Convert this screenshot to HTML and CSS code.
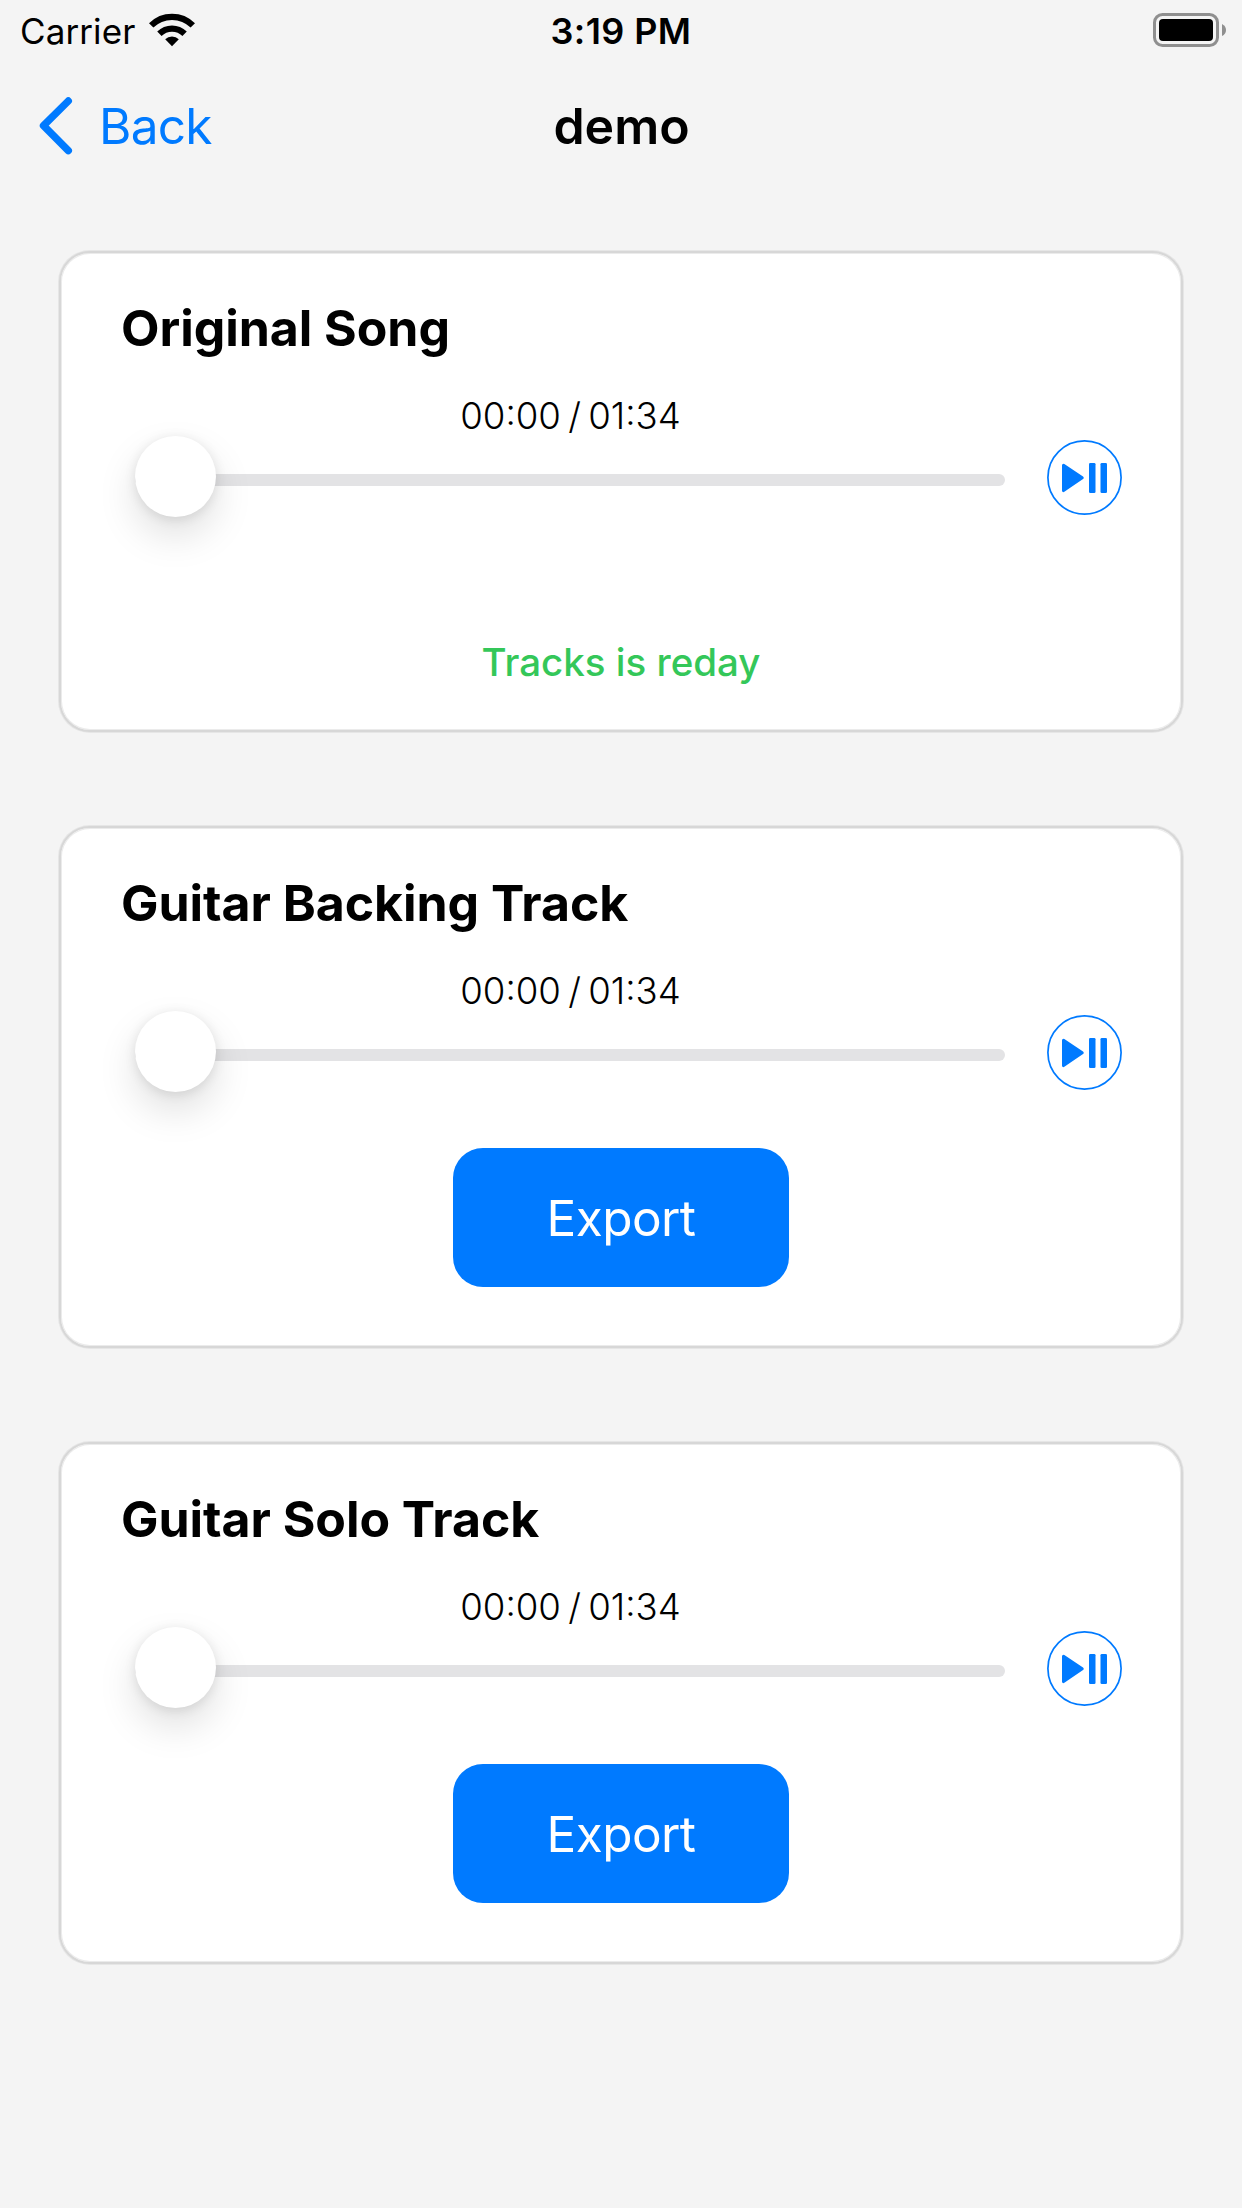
FILE: index.html
```html
<!DOCTYPE html>
<html lang="en">
<head>
<meta charset="utf-8">
<title>demo</title>
<link rel="stylesheet" href="styles.css">
</head>
<body>
<svg class="defs" width="0" height="0" aria-hidden="true">
  <symbol id="play-pause" viewBox="0 0 75 75">
    <circle cx="37.5" cy="37.5" r="36.6" fill="none" stroke="currentColor" stroke-width="1.7"/>
    <path d="M16.5 25.2l18.7 12.6-18.7 12.8z" fill="currentColor" stroke="currentColor" stroke-width="3" stroke-linejoin="round"/>
    <rect x="42" y="23" width="6.5" height="30" rx="1.3" fill="currentColor"/>
    <rect x="53.5" y="23" width="6.5" height="30" rx="1.3" fill="currentColor"/>
  </symbol>
</svg>
<header class="status">
  <div class="status-left">
    <span class="carrier">Carrier</span>
    <svg class="wifi" width="46" height="34" viewBox="0 0 46 34">
      <g fill="none" stroke="#000" stroke-width="6.2">
        <path d="M2.2 12.4A29.5 29.5 0 0 1 43.8 12.4"/>
        <path d="M10.4 20.8A18 18 0 0 1 35.6 20.8"/>
      </g>
      <path d="M23 33.2l-6.8-6.9a9.7 9.7 0 0 1 13.6 0z"/>
    </svg>
  </div>
  <span class="clock">3:19 PM</span>
  <svg class="battery" width="74" height="34" viewBox="0 0 74 34">
    <rect x="1.5" y="1.5" width="63" height="31" rx="8" fill="none" stroke="#8f8f8f" stroke-width="3"/>
    <rect x="6" y="6" width="54" height="22" rx="4"/>
    <path d="M69 11q4 2 4 6t-4 6z" fill="#8f8f8f"/>
  </svg>
</header>
<nav class="nav">
  <a class="back">
    <svg width="34" height="58" viewBox="0 0 34 58"><path d="M29.3 4L4.5 28.7 29.3 53.7" fill="none" stroke="currentColor" stroke-width="7.4" stroke-linecap="round" stroke-linejoin="round"/></svg>
    <span class="back-text">Back</span>
  </a>
  <h1 class="page-title">demo</h1>
</nav>
<main class="cards">
  <section class="card card-original">
    <h2 class="title">Original Song</h2>
    <div class="player">
      <div class="scrub">
        <div class="time">00:00 / 01:34</div>
        <div class="slider"><div class="track"></div><div class="thumb"></div></div>
      </div>
      <svg class="play" width="75" height="75"><use href="#play-pause"/></svg>
    </div>
    <p class="ready">Tracks is reday</p>
  </section>
  <section class="card">
    <h2 class="title">Guitar Backing Track</h2>
    <div class="player">
      <div class="scrub">
        <div class="time">00:00 / 01:34</div>
        <div class="slider"><div class="track"></div><div class="thumb"></div></div>
      </div>
      <svg class="play" width="75" height="75"><use href="#play-pause"/></svg>
    </div>
    <button class="export">Export</button>
  </section>
  <section class="card">
    <h2 class="title">Guitar Solo Track</h2>
    <div class="player">
      <div class="scrub">
        <div class="time">00:00 / 01:34</div>
        <div class="slider"><div class="track"></div><div class="thumb"></div></div>
      </div>
      <svg class="play" width="75" height="75"><use href="#play-pause"/></svg>
    </div>
    <button class="export">Export</button>
  </section>
</main>
</body>
</html>
```
FILE: styles.css
```css
* { box-sizing: border-box; margin: 0; }
body {
  min-height: 2208px;
  background: #f4f4f4;
  color: #000;
  font-family: Inter, "Liberation Sans", sans-serif;
  white-space: nowrap;
}
.defs { display: none; }
.status {
  display: grid;
  grid-template-columns: 1fr auto 1fr;
  align-items: start;
  height: 60px;
  padding: 0 15px;
}
.status-left { display: flex; padding-left: 5px; }
.carrier, .clock { font-size: 35px; line-height: 62px; }
.carrier { width: 129px; letter-spacing: 0.1px; }
.clock { font-size: 36px; font-weight: 600; letter-spacing: 0.4px; }
.wifi { margin-top: 13px; }
.battery { margin-top: 13px; justify-self: end; }
.nav {
  display: grid;
  grid-template-columns: 1fr auto 1fr;
  height: 191px;
  padding: 36px 39px 0;
}
.back { display: flex; color: #007aff; }
.back svg { margin-top: 1px; }
.back-text { margin-left: 26px; font-size: 49.5px; line-height: 60px; letter-spacing: -0.7px; }
.page-title { padding-left: 1px; font-size: 50px; line-height: 60px; font-weight: 600; }
.cards {
  display: flex;
  flex-direction: column;
  gap: 94px;
  padding: 0 59px;
}
.card {
  display: flex;
  flex-direction: column;
  height: 522px;
  padding: 45px 60px 0;
  border: 2px solid #d7d7d7;
  border-radius: 31px;
  background: #fff;
  box-shadow: 0 0 0 1px #e6e6e6, inset 0 0 0 1px #ebebeb;
}
.card-original { height: 481px; }
.title { font-size: 50px; line-height: 60px; font-weight: 700; letter-spacing: -0.05px; }
.player { display: flex; margin-top: 32px; }
.scrub { flex: none; width: 870px; margin-left: 14px; }
.time {
  height: 46px;
  padding-left: 1px;
  font-size: 36.6px;
  line-height: 53px;
  font-weight: 300;
  word-spacing: -3px;
  text-align: center;
}
.slider { position: relative; height: 81px; padding-top: 38px; }
.track { height: 12px; border-radius: 6px; background: #e3e3e5; }
.thumb {
  position: absolute;
  left: 0;
  top: 0;
  width: 81px;
  height: 81px;
  border-radius: 50%;
  background: #fff;
  box-shadow: 0 18px 39px rgba(0,0,0,.13), 0 2px 12px rgba(0,0,0,.1);
}
.play { flex: none; margin: 50px 0 0 42px; color: #007aff; }
.ready {
  margin-top: 115px;
  color: #34c759;
  font-size: 38.5px;
  line-height: 60px;
  font-weight: 500;
  text-align: center;
}
.export {
  align-self: center;
  width: 336px;
  height: 139px;
  margin-top: 56px;
  padding: 1px 0 0;
  border: 0;
  border-radius: 30px;
  background: #007aff;
  color: #fff;
  font: 400 49.5px/138px Inter, "Liberation Sans", sans-serif;
  letter-spacing: -0.6px;
}
```
